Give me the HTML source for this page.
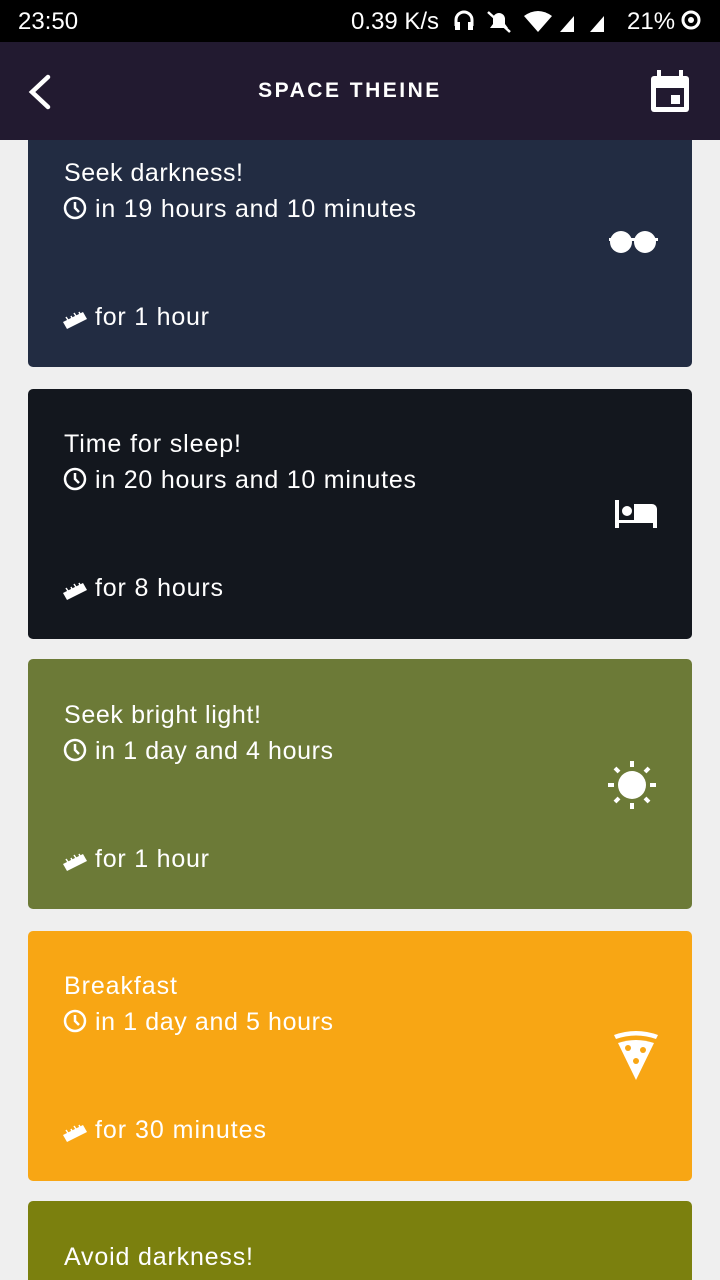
<!DOCTYPE html><html style="width:720px;height:1280px;overflow:hidden"><head><style>
body{margin:0;width:720px;height:1280px;overflow:hidden;background:#efefef;font-family:"Liberation Sans",Roboto,sans-serif;position:relative}
.sb{position:absolute;top:0;left:0;width:720px;height:42px;background:#000;color:#fff;font-size:24px}
.hd{position:absolute;top:42px;left:0;width:720px;height:98px;background:#221a30;z-index:2}
.card{position:absolute;left:28px;width:664px;height:250px;border-radius:5px;color:#fff}
</style></head><body>
<div class="sb"><span style="position:absolute;left:18px;top:8px">23:50</span><span style="position:absolute;left:351px;top:8px">0.39 K/s</span>
<svg style="position:absolute;left:452px;top:8px" width="250" height="28"><path d="M4 18v-6a8 8 0 0 1 16 0v6" stroke="#fff" stroke-width="3" fill="none"/><rect x="3" y="14" width="5" height="8" fill="#fff"/><rect x="16" y="14" width="5" height="8" fill="#fff"/><path d="M38 20h18l-3-4v-5a6 6 0 0 0-12 0v5z" fill="#fff"/><line x1="36" y1="4" x2="58" y2="24" stroke="#fff" stroke-width="2.5"/><path d="M72 8q14-10 28 0l-14 16z" fill="#fff"/><path d="M108 24l14-16v16z" fill="#fff"/><path d="M138 24l14-16v16z" fill="#fff"/><text x="175" y="21" fill="#fff" font-size="24" font-family="Liberation Sans">21%</text><circle cx="239" cy="12" r="8" fill="none" stroke="#fff" stroke-width="3"/><circle cx="239" cy="12" r="3" fill="#fff"/></svg></div>
<div class="hd"><svg style="position:absolute;left:26px;top:32px" width="26" height="36"><path d="M22 3L6 18l16 15" stroke="#fff" stroke-width="4.5" fill="none" stroke-linecap="round"/></svg>
<div style="position:absolute;left:0;width:700px;top:37px;text-align:center;color:#fff;font-size:21px;font-weight:bold;letter-spacing:2.5px">SPACE THEINE</div>
<svg style="position:absolute;left:648px;top:28px" width="46" height="46"><rect x="3" y="6" width="38" height="36" rx="3" fill="#fff"/><rect x="8" y="18" width="28" height="19" fill="#221a30"/><rect x="23" y="25" width="9" height="9" fill="#fff"/><rect x="9" y="0" width="4" height="8" fill="#fff"/><rect x="31" y="0" width="4" height="8" fill="#fff"/></svg></div>
<div class="card" style="top:117px;background:#222c42"></div>
<div class="card" style="top:389px;background:#13171e"></div>
<div class="card" style="top:659px;background:#6c7a37"></div>
<div class="card" style="top:931px;background:#f8a614"></div>
<div class="card" style="top:1201px;height:79px;border-radius:5px 5px 0 0;background:#7b800e"></div>
<svg width="720" height="1280" style="position:absolute;left:0;top:0;z-index:1" font-family="Liberation Sans" fill="#fff" font-size="25">
<defs><g id="clk"><circle cx="0" cy="0" r="10" fill="none" stroke="#fff" stroke-width="2.5"/><path d="M0-6v6l4 4" stroke="#fff" stroke-width="2.5" fill="none"/></g>
<g id="rul"><path d="M-12 4l20-10 4 7-20 10z" fill="#fff"/><path d="M-7 2l-2-3M-3 0l-1-2M1-2l-2-3M5-4l-1-2" stroke="#fff" stroke-width="1.5"/></g></defs>
<g>
<text x="64" y="181" textLength="179">Seek darkness!</text><use href="#clk" x="75" y="208"/><text x="95" y="217" textLength="321">in 19 hours and 10 minutes</text><use href="#rul" x="75" y="318"/><text x="95" y="325" textLength="114">for 1 hour</text>
<circle cx="621" cy="242" r="11"/><circle cx="645" cy="242" r="11"/><rect x="609" y="238" width="49" height="3"/></g>
<g>
<text x="64" y="452" textLength="177">Time for sleep!</text><use href="#clk" x="75" y="479"/><text x="95" y="488" textLength="321">in 20 hours and 10 minutes</text><use href="#rul" x="75" y="589"/><text x="95" y="596" textLength="128">for 8 hours</text>
<rect x="615" y="500" width="4" height="28"/><circle cx="627" cy="511" r="5"/><path d="M634 504h18a5 5 0 0 1 5 5v19h-4v-5h-34v-3h15z"/></g>
<g>
<text x="64" y="723" textLength="197">Seek bright light!</text><use href="#clk" x="75" y="750"/><text x="95" y="759" textLength="238">in 1 day and 4 hours</text><use href="#rul" x="75" y="860"/><text x="95" y="867" textLength="114">for 1 hour</text>
<circle cx="632" cy="785" r="14"/><g stroke="#fff" stroke-width="4"><path d="M632 761v6M632 803v6M608 785h6M650 785h6M615 768l4 4M645 798l4 4M649 768l-4 4M619 798l-4 4"/></g></g>
<g>
<text x="64" y="994" textLength="113">Breakfast</text><use href="#clk" x="75" y="1021"/><text x="95" y="1030" textLength="238">in 1 day and 5 hours</text><use href="#rul" x="75" y="1131"/><text x="95" y="1138" textLength="171">for 30 minutes</text>
<path d="M614 1035q22-8 44 0l-2 4q-20-7-40 0z"/><path d="M618 1043q18-6 36 0l-18 37z"/><circle cx="628" cy="1048" r="3" fill="#f8a614"/><circle cx="643" cy="1050" r="3" fill="#f8a614"/><circle cx="636" cy="1061" r="3" fill="#f8a614"/></g>
<text x="64" y="1265" textLength="189">Avoid darkness!</text>
</svg>
</body></html>
